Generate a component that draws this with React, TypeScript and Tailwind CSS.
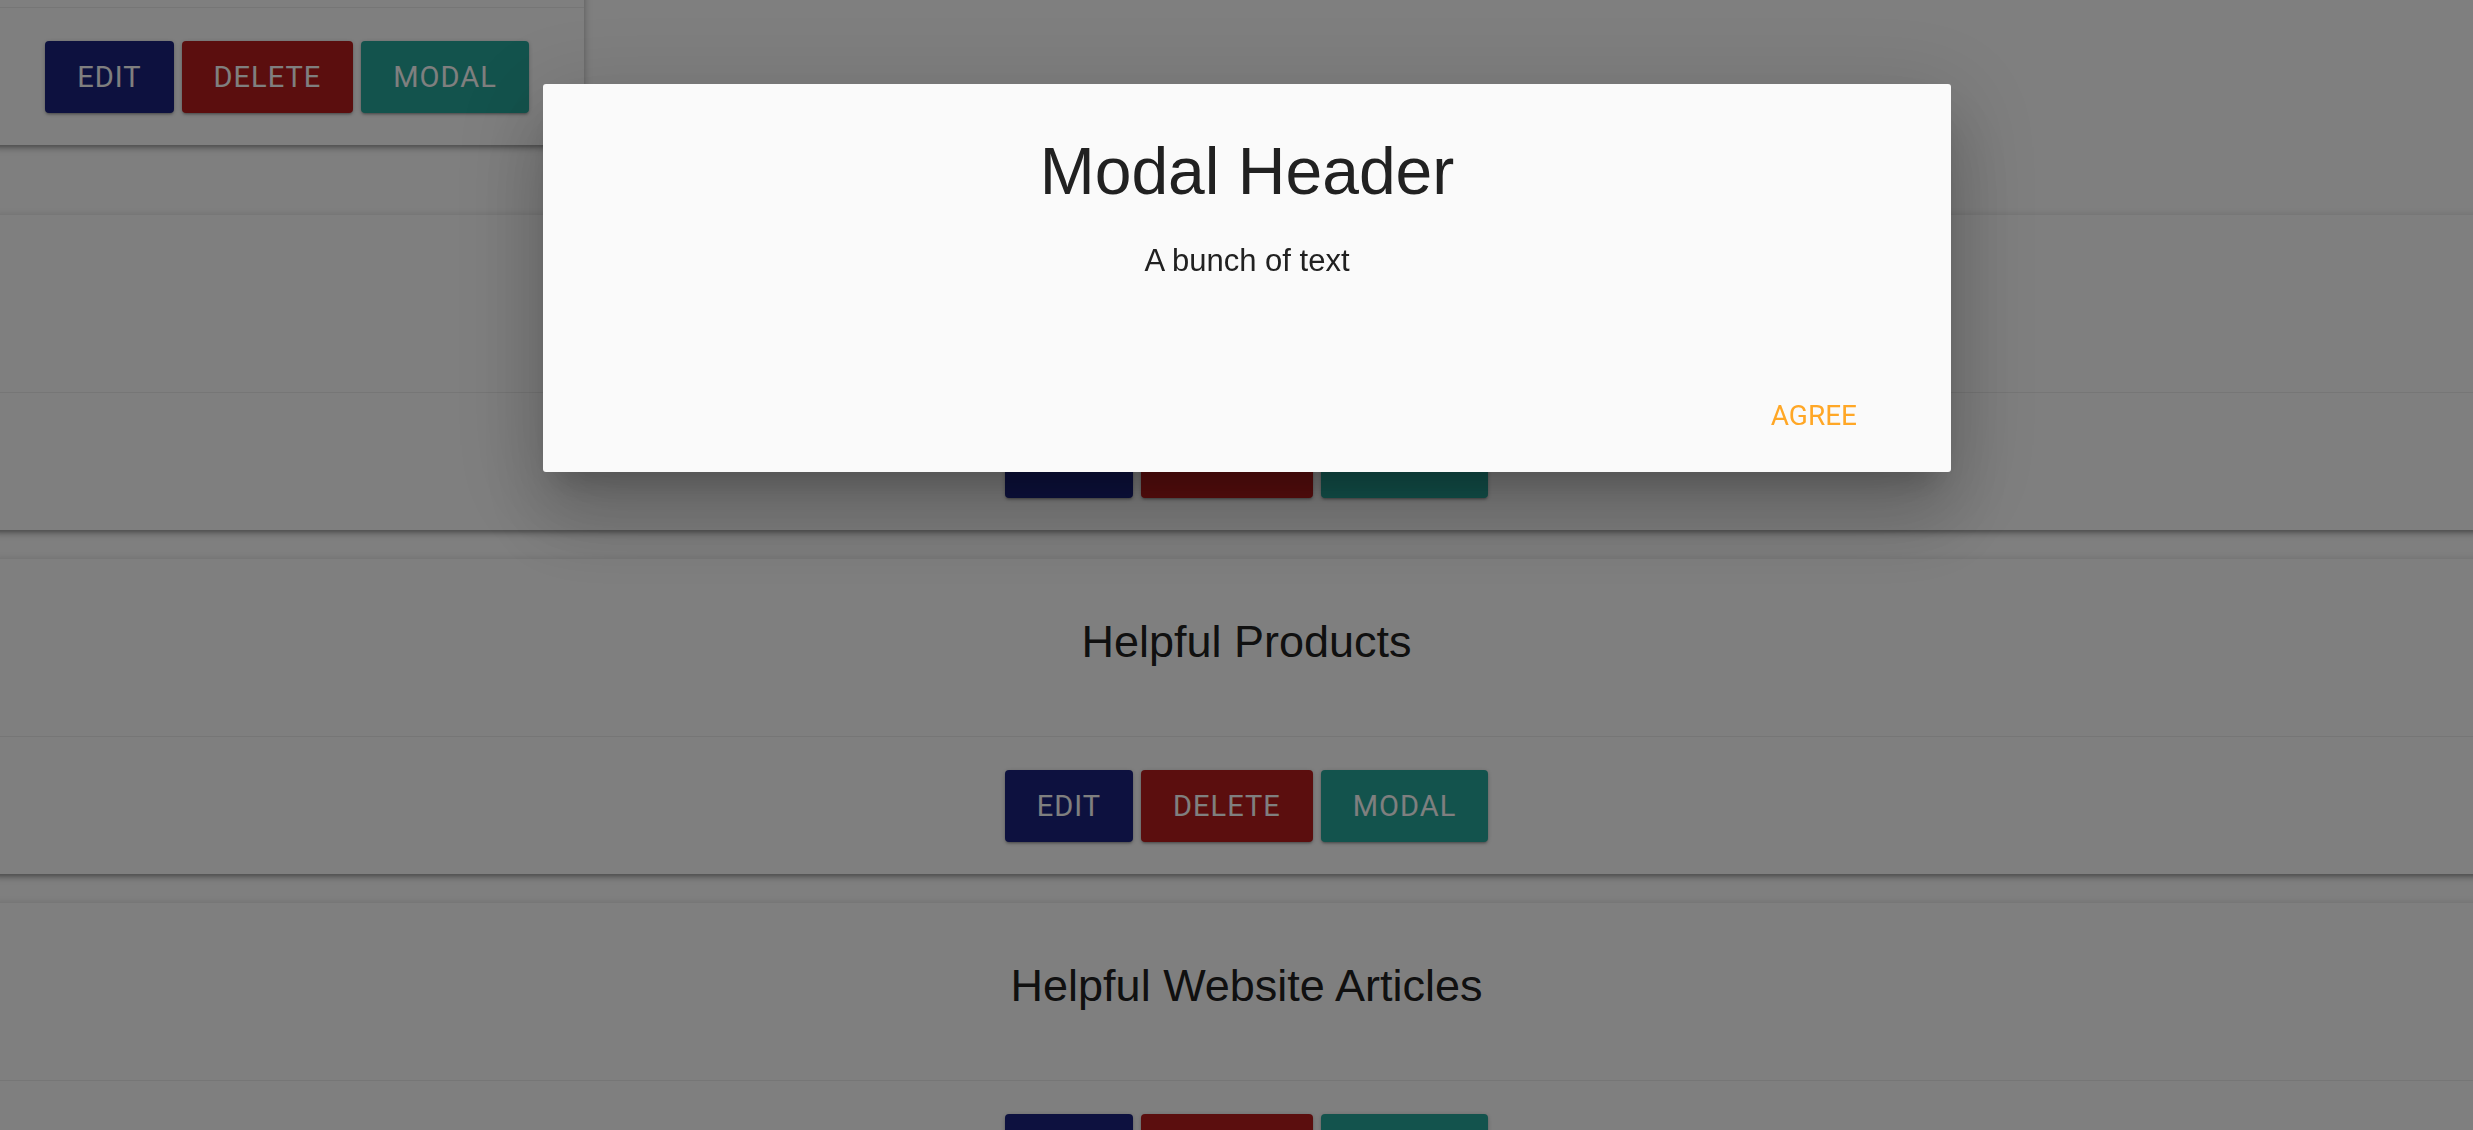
import React from "react";

type CardProps = {
  title: string;
  narrow?: boolean;
};

const cardShadow =
  "shadow-[0_4px_4px_0_rgba(0,0,0,0.14),0_6px_2px_-4px_rgba(0,0,0,0.12),0_2px_10px_0_rgba(0,0,0,0.2)]";

function ActionButton({ label, color }: { label: string; color: string }) {
  return (
    <button
      className={`h-[72px] px-[32px] rounded-[4px] text-white uppercase tracking-[1px] text-[29px] leading-[72px] font-['Roboto',sans-serif] shadow-[0_2px_2px_0_rgba(0,0,0,0.14),0_3px_1px_-2px_rgba(0,0,0,0.12),0_1px_5px_0_rgba(0,0,0,0.2)] ${color}`}
    >
      {label}
    </button>
  );
}

function Card({ title, narrow }: CardProps) {
  return (
    <div className={`bg-white ${cardShadow} ${narrow ? "w-[594px] mb-[70px]" : "w-full mb-[29px]"}`}>
      <div className="h-[177px] pt-[56px] text-center">
        <span className="text-[45px] leading-[54px] text-[#212121] font-['Liberation_Sans',Arial,sans-serif]">
          {title}
        </span>
      </div>
      <div className="border-t border-[rgba(160,160,160,0.2)] pt-[33px] pb-[32px] flex justify-center gap-[8px]">
        <ActionButton label="Edit" color="bg-[#1a237e]" />
        <ActionButton label="Delete" color="bg-[#b71c1c]" />
        <ActionButton label="Modal" color="bg-[#26a69a]" />
      </div>
    </div>
  );
}

export default function App() {
  const resources = ["Helpful Videos", "Helpful Products", "Helpful Website Articles", "Helpful Books"];

  return (
    <div className="relative h-screen overflow-hidden bg-white">
      <div className="-mt-[170px] -ml-[10px] w-[2513px]">
        <Card title="Helpful Apps" narrow />
        {resources.map((r) => (
          <Card key={r} title={r} />
        ))}
      </div>

      {/* overlay */}
      <div className="fixed inset-0 bg-black/50" />

      {/* modal */}
      <div className="fixed left-[543px] top-[84px] w-[1408px] h-[388px] bg-[#fafafa] rounded-[3px] flex flex-col shadow-[0_48px_76px_6px_rgba(0,0,0,0.14),0_18px_92px_16px_rgba(0,0,0,0.12),0_22px_30px_-14px_rgba(0,0,0,0.2)]">
        <div className="pt-[49px] text-center text-[#212121] font-['Liberation_Sans',Arial,sans-serif]">
          <h4 className="text-[66px] leading-[76px]">Modal Header</h4>
          <p className="mt-[34px] text-[31px] leading-[36px]">A bunch of text</p>
        </div>
        <div className="mt-auto flex justify-end pr-[94px] pb-[38px]">
          <button className="text-[28px] leading-[36px] uppercase text-[#ffa726] font-['Roboto',sans-serif]">
            Agree
          </button>
        </div>
      </div>
    </div>
  );
}
